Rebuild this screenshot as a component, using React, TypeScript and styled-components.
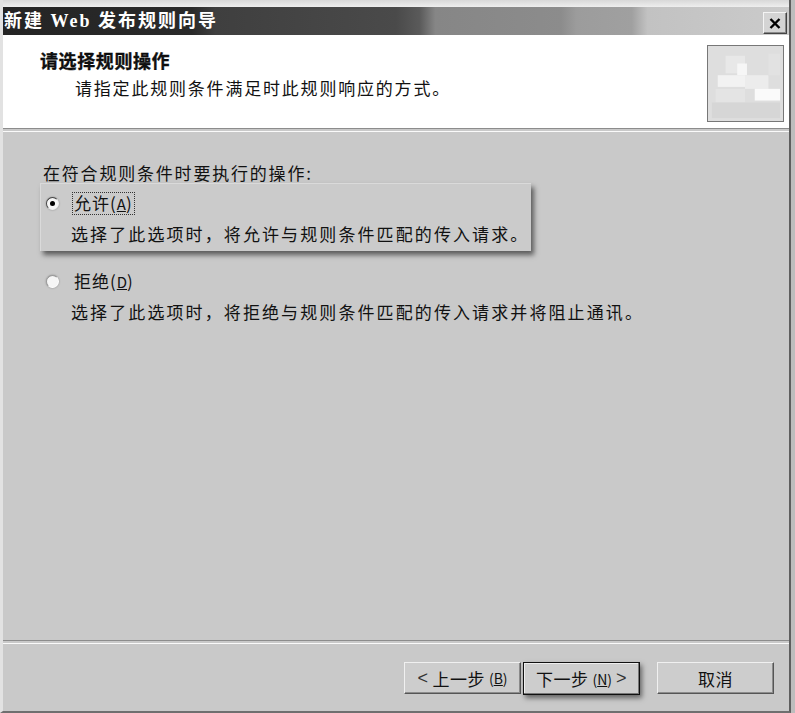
import styled, { createGlobalStyle } from 'styled-components'

const GlobalStyle = createGlobalStyle`
  html, body {
    margin: 0;
    padding: 0;
    background: #bdbdbd;
  }
  body {
    font-family: "Noto Sans CJK SC", "Liberation Sans", sans-serif;
    color: #111;
  }
`

const Window = styled.div`
  width: 791px;
  height: 713px;
  box-sizing: border-box;
  display: flex;
  flex-direction: column;
  background: #c9c9c9;
  border-left: 3px solid #e2e2e2;
  border-right: 2px solid #5e5e5e;
  border-bottom: 2px solid #6f6f6f;
`

const TopStrip = styled.div`
  height: 7px;
  background: linear-gradient(to bottom, #d8d8d8, #eeeeee);
`

const TitleBar = styled.div`
  height: 28px;
  display: flex;
  align-items: center;
  justify-content: space-between;
  padding: 0 2px 0 1px;
  background: linear-gradient(
    to right,
    #242424 0%,
    #2a2a2a 24%,
    #3f3f3f 27%,
    #4a4a4a 50%,
    #5a5a5a 53%,
    #868686 55%,
    #8c8c8c 71%,
    #9c9c9c 73%,
    #a0a0a0 80%,
    #c2c2c2 82%,
    #cbcbcb 100%
  );
`

const Title = styled.span`
  color: #fff;
  font-family: "Liberation Serif", "Noto Sans CJK SC", serif;
  font-weight: 700;
  font-size: 18px;
  letter-spacing: 2px;
  line-height: 1;
`

const CloseButton = styled.button`
  width: 24px;
  height: 22px;
  padding: 0;
  margin-top: 4px;
  display: flex;
  align-items: center;
  justify-content: center;
  background: #d4d4d4;
  border: 1px solid;
  border-color: #f4f4f4 #444 #444 #f4f4f4;
  box-shadow: inset -1px -1px 0 #8a8a8a;
`

const Header = styled.div`
  height: 93px;
  background: #fff;
  display: flex;
  justify-content: space-between;
  align-items: flex-start;
  padding: 0 5px 0 37px;
`

const HeaderText = styled.div`
  padding-top: 14px;
`

const HeaderTitle = styled.div`
  font-weight: 700;
  font-size: 18px;
  letter-spacing: 0.6px;
  line-height: 22px;
  -webkit-text-stroke: 0.3px #000;
`

const HeaderSub = styled.div`
  margin: 6px 0 0 35px;
  font-size: 17px;
  letter-spacing: 1.8px;
  line-height: 22px;
`

const HeaderArt = styled.svg`
  margin-top: 10px;
  width: 77px;
  height: 77px;
  border: 1px solid #777;
  box-sizing: border-box;
`

const Divider = styled.div`
  height: 2px;
  border-top: 1px solid #8c8c8c;
  border-bottom: 1px solid #fafafa;
`

const Body = styled.div`
  flex: 1;
  padding: 31px 0 0 40px;
`

const Prompt = styled.div`
  font-size: 17px;
  letter-spacing: 1.8px;
  line-height: 20px;
`

const Option = styled.div<{ $active?: boolean }>`
  width: fit-content;
  margin: ${p => (p.$active ? '0 0 0 -3px' : '12px 0 0 0')};
  padding: ${p => (p.$active ? '8px 2px 6px 5px' : '6px 2px 6px 2px')};
  background: ${p => (p.$active ? '#cbcbcb' : 'transparent')};
  border-top: 1px solid ${p => (p.$active ? '#dadada' : 'transparent')};
  border-left: 1px solid ${p => (p.$active ? '#dadada' : 'transparent')};
  box-shadow: ${p => (p.$active ? '3px 4px 5px rgba(0, 0, 0, 0.55)' : 'none')};
`

const OptionHead = styled.div`
  display: flex;
  align-items: center;
  gap: 14px;
  height: 22px;
`

const Radio = styled.span<{ $checked?: boolean }>`
  width: 13px;
  height: 13px;
  box-sizing: border-box;
  border-radius: 50%;
  background: #f6f6f6;
  border: 1px solid;
  border-color: ${p => (p.$checked ? '#444 #eee #eee #444' : '#999 #fff #fff #999')};
  box-shadow: 0 0 2px rgba(0, 0, 0, 0.35);
  display: flex;
  align-items: center;
  justify-content: center;
  &::after {
    content: '';
    width: 5px;
    height: 5px;
    border-radius: 50%;
    background: ${p => (p.$checked ? '#000' : 'transparent')};
  }
`

const OptionLabel = styled.span<{ $focus?: boolean }>`
  font-size: 17px;
  letter-spacing: 1px;
  line-height: 20px;
  padding: 0 1px;
  outline: ${p => (p.$focus ? '1px dotted #333' : 'none')};
`

const Hotkey = styled.span`
  text-decoration: underline;
  font-size: 15px;
  letter-spacing: 0;
`

const OptionDesc = styled.div`
  margin: 9px 0 0 25px;
  font-size: 17px;
  letter-spacing: 2.1px;
  line-height: 22px;
`

const Footer = styled.div`
  height: 67px;
  box-sizing: border-box;
  display: flex;
  justify-content: flex-end;
  align-items: flex-start;
  padding: 18px 15px 0 0;
`

const Button = styled.button<{ $default?: boolean }>`
  width: 117px;
  height: ${p => (p.$default ? '33px' : '32px')};
  margin-left: ${p => (p.$default ? '2px' : '0')};
  background: #cdcdcd;
  border: 1px solid;
  border-color: ${p => (p.$default ? '#111' : '#f0f0f0 #555 #555 #f0f0f0')};
  box-shadow: ${p =>
    p.$default
      ? 'inset -1px -1px 0 #777, inset 1px 1px 0 #eee, 2px 3px 5px rgba(0,0,0,0.5)'
      : 'inset -1px -1px 0 #8c8c8c'};
  font-family: "Noto Sans CJK SC", sans-serif;
  font-size: 17px;
  letter-spacing: 0.5px;
  color: #111;
  padding: 0;
  display: flex;
  align-items: center;
  justify-content: center;
  gap: 4px;
`

const Arrow = styled.span`
  font-family: "Liberation Sans", sans-serif;
  font-size: 18px;
  color: #333;
`

const Gap = styled.div`
  width: 17px;
`

const ButtonKey = styled.span`
  font-size: 14px;
  letter-spacing: 0;
`

const artBlocks = [
  { x: 0, y: 0, w: 77, h: 77, c: '#dedede' },
  { x: 18, y: 10, w: 20, h: 18, c: '#e8e8e8' },
  { x: 30, y: 18, w: 10, h: 12, c: '#f6f6f6' },
  { x: 10, y: 30, w: 28, h: 12, c: '#f2f2f2' },
  { x: 38, y: 30, w: 24, h: 14, c: '#ececec' },
  { x: 48, y: 44, w: 26, h: 12, c: '#fafafa' },
  { x: 8, y: 44, w: 30, h: 14, c: '#e4e4e4' },
  { x: 4, y: 58, w: 70, h: 16, c: '#d6d6d6' },
  { x: 62, y: 8, w: 12, h: 22, c: '#e2e2e2' }
]

export default function App() {
  return (
    <>
      <GlobalStyle />
      <Window>
        <TopStrip />
        <TitleBar>
          <Title>新建 Web 发布规则向导</Title>
          <CloseButton type="button">
            <svg width="12" height="11" viewBox="0 0 12 11">
              <path d="M1.5 1 L10.5 10 M10.5 1 L1.5 10" stroke="#000" strokeWidth="2.4" />
            </svg>
          </CloseButton>
        </TitleBar>
        <Header>
          <HeaderText>
            <HeaderTitle>请选择规则操作</HeaderTitle>
            <HeaderSub>请指定此规则条件满足时此规则响应的方式。</HeaderSub>
          </HeaderText>
          <HeaderArt viewBox="0 0 77 77">
            {artBlocks.map((b, i) => (
              <rect key={i} x={b.x} y={b.y} width={b.w} height={b.h} fill={b.c} />
            ))}
          </HeaderArt>
        </Header>
        <Divider />
        <Body>
          <Prompt>在符合规则条件时要执行的操作:</Prompt>
          <Option $active>
            <OptionHead>
              <Radio $checked />
              <OptionLabel $focus>
                允许(<Hotkey>A</Hotkey>)
              </OptionLabel>
            </OptionHead>
            <OptionDesc>选择了此选项时，将允许与规则条件匹配的传入请求。</OptionDesc>
          </Option>
          <Option>
            <OptionHead>
              <Radio />
              <OptionLabel>
                拒绝(<Hotkey>D</Hotkey>)
              </OptionLabel>
            </OptionHead>
            <OptionDesc>选择了此选项时，将拒绝与规则条件匹配的传入请求并将阻止通讯。</OptionDesc>
          </Option>
        </Body>
        <Divider />
        <Footer>
          <Button type="button">
            <Arrow>&lt;</Arrow> 上一步<ButtonKey>(<u>B</u>)</ButtonKey>
          </Button>
          <Button type="button" $default>
            下一步<ButtonKey>(<u>N</u>)</ButtonKey> <Arrow>&gt;</Arrow>
          </Button>
          <Gap />
          <Button type="button">取消</Button>
        </Footer>
      </Window>
    </>
  )
}
